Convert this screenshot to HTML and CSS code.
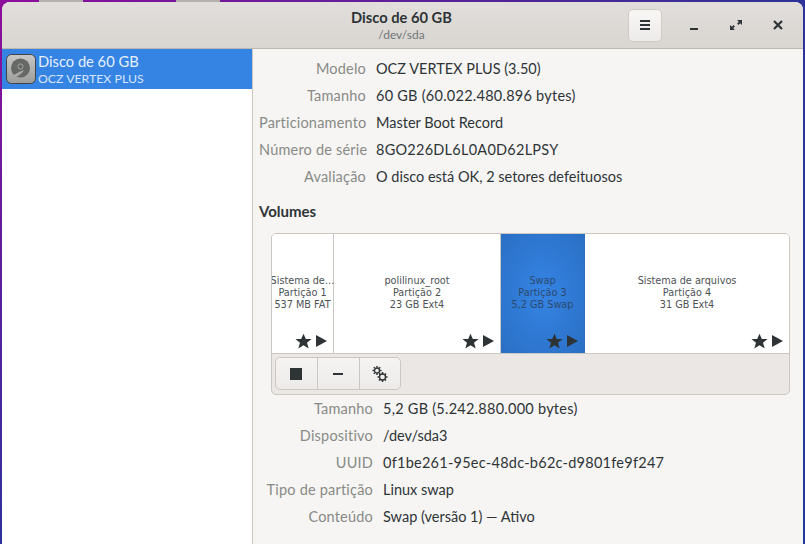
FILE: index.html
```html
<!DOCTYPE html>
<html lang="pt">
<head>
<meta charset="utf-8">
<title>Disco de 60 GB</title>
<link rel="stylesheet" href="styles.css">
</head>
<body>
<div class="desk-tab tab-a"></div>
<div class="desk-tab tab-b"></div>
<div class="window">
  <header class="titlebar">
    <div class="titles">
      <div class="title">Disco de 60 GB</div>
      <div class="subtitle">/dev/sda</div>
    </div>
    <button class="menu-btn" aria-label="Menu">
      <svg width="16" height="16" viewBox="0 0 16 16"><path d="M3 3h10v2H3zM3 7h10v2H3zM3 11h10v2H3z" fill="#2e3436"/></svg>
    </button>
    <div class="wm">
      <svg width="16" height="16" viewBox="0 0 16 16"><path d="M4 11h8v2H4z" fill="#2e3436"/></svg>
      <svg width="16" height="16" viewBox="0 0 16 16"><path d="M9 3h5v5l-1.800-1.800-1.700 1.700-1.400-1.400 1.700-1.700zM7 13H2V8l1.800 1.800 1.700-1.700 1.400 1.400-1.700 1.700z" fill="#2e3436"/></svg>
      <svg width="16" height="16" viewBox="0 0 16 16"><path d="M4 4l8 8M12 4l-8 8" stroke="#2e3436" stroke-width="2.200" fill="none"/></svg>
    </div>
  </header>
  <div class="content">
    <aside class="sidebar">
      <div class="drive">
        <svg class="hd" width="30" height="30" viewBox="0 0 30 30">
          <defs><linearGradient id="hdg" x1="0" y1="0" x2="0" y2="1"><stop offset="0" stop-color="#c8c8c6"/><stop offset="1" stop-color="#9c9c9a"/></linearGradient></defs>
          <rect x="0.500" y="0.500" width="29" height="29" rx="5" fill="url(#hdg)" stroke="#3f4346"/>
          <circle cx="14.500" cy="14" r="9.500" fill="#666866"/>
          <circle cx="14.500" cy="12.500" r="2.600" fill="none" stroke="#a5a5a3"/>
          <path d="M6 22l8-4.500 4-1.500-2 3-7 5z" fill="#a8a8a6"/>
        </svg>
        <div class="drive-text">
          <div class="drive-name">Disco de 60 GB</div>
          <div class="drive-model">OCZ VERTEX PLUS</div>
        </div>
      </div>
    </aside>
    <main class="main">
      <dl class="props top">
        <dt>Modelo</dt><dd>OCZ VERTEX PLUS (3.50)</dd>
        <dt>Tamanho</dt><dd class="numeric">60 GB (60.022.480.896 bytes)</dd>
        <dt>Particionamento</dt><dd>Master Boot Record</dd>
        <dt>Número de série</dt><dd class="numeric">8GO226DL6L0A0D62LPSY</dd>
        <dt>Avaliação</dt><dd>O disco está OK, 2 setores defeituosos</dd>
      </dl>
      <h2 class="volumes-title">Volumes</h2>
      <section class="volumes">
        <div class="parts">
          <div class="part p1">
            <div class="part-label">Sistema de…<br>Partição 1<br>537 MB FAT</div>
            <div class="part-icons"><svg class="star" viewBox="0 0 16 16"><path d="M8 .6l2.200 5h5.400l-4.300 3.500 1.600 5.500L8 11.500l-4.900 3.100 1.600-5.500L.4 5.600h5.400z"/></svg><svg class="play" viewBox="0 0 11 12"><path d="M0 0l11 6-11 6z"/></svg></div>
          </div>
          <div class="part p2">
            <div class="part-label">polilinux_root<br>Partição 2<br>23 GB Ext4</div>
            <div class="part-icons"><svg class="star" viewBox="0 0 16 16"><path d="M8 .6l2.200 5h5.400l-4.300 3.500 1.600 5.500L8 11.500l-4.900 3.100 1.600-5.500L.4 5.600h5.400z"/></svg><svg class="play" viewBox="0 0 11 12"><path d="M0 0l11 6-11 6z"/></svg></div>
          </div>
          <div class="part p3">
            <div class="part-label">Swap<br>Partição 3<br>5,2 GB Swap</div>
            <div class="part-icons"><svg class="star" viewBox="0 0 16 16"><path d="M8 .6l2.200 5h5.400l-4.300 3.500 1.600 5.500L8 11.500l-4.900 3.100 1.600-5.500L.4 5.600h5.400z"/></svg><svg class="play" viewBox="0 0 11 12"><path d="M0 0l11 6-11 6z"/></svg></div>
          </div>
          <div class="part p4">
            <div class="part-label">Sistema de arquivos<br>Partição 4<br>31 GB Ext4</div>
            <div class="part-icons"><svg class="star" viewBox="0 0 16 16"><path d="M8 .6l2.200 5h5.400l-4.300 3.500 1.600 5.500L8 11.500l-4.900 3.100 1.600-5.500L.4 5.600h5.400z"/></svg><svg class="play" viewBox="0 0 11 12"><path d="M0 0l11 6-11 6z"/></svg></div>
          </div>
        </div>
        <div class="toolbar">
          <div class="btn-group">
            <button class="tool"><svg width="12" height="12" viewBox="0 0 12 12"><rect width="12" height="12" fill="#2e3436"/></svg></button>
            <button class="tool"><svg width="12" height="12" viewBox="0 0 12 12"><rect x="1" y="5" width="10" height="2" fill="#2e3436"/></svg></button>
            <button class="tool"><svg width="16" height="16" viewBox="0 0 16 16"><g fill="none" stroke="#2e3436"><circle cx="5" cy="4.500" r="2.500" stroke-width="1.300"/><circle cx="10.500" cy="11" r="3" stroke-width="1.300"/><path d="M5 0v1.500M5 7.500V9M.5 4.500H2M8 4.500h1.500M1.800 1.300l1 1M7.200 6.700l1 1M8.200 1.300l-1 1M2.800 6.700l-1 1M10.500 6v2M10.500 14v2M5.500 11h2M13.500 11h2M7 7.500l1.300 1.300M12.700 13.200L14 14.500M14 7.500l-1.300 1.300M8.300 13.200L7 14.500" stroke-width="1.500"/></g></svg></button>
          </div>
        </div>
      </section>
      <dl class="props bottom">
        <dt>Tamanho</dt><dd class="numeric">5,2 GB (5.242.880.000 bytes)</dd>
        <dt>Dispositivo</dt><dd>/dev/sda3</dd>
        <dt>UUID</dt><dd class="numeric">0f1be261-95ec-48dc-b62c-d9801fe9f247</dd>
        <dt>Tipo de partição</dt><dd>Linux swap</dd>
        <dt>Conteúdo</dt><dd>Swap (versão 1) — Ativo</dd>
      </dl>
    </main>
  </div>
</div>
</body>
</html>
```

FILE: styles.css
```css
* { box-sizing: border-box; }
html, body { height: 100%; }
body {
  margin: 0;
  overflow: hidden;
  padding: 2px 2px 0 2px;
  background: linear-gradient(to bottom right, #8c0d9a 0%, #2e3299 50%, #1f3a9a 100%);
  font-family: Lato, sans-serif;
  font-size: 14.500px;
  color: #2e3436;
  position: relative;
}
.desk-tab {
  position: absolute;
  top: 0;
  width: 44px;
  height: 2px;
  background: #b4b0ac;
}
.tab-a { left: 39px; }
.tab-b { left: 176px; }
.window {
  height: 100%;
  display: flex;
  flex-direction: column;
  background: #f6f5f4;
  border-radius: 8px 8px 0 0;
  overflow: hidden;
}
.titlebar {
  height: 47px;
  flex: none;
  display: flex;
  align-items: center;
  justify-content: flex-end;
  position: relative;
  background: linear-gradient(#e1dedb, #d9d5d1);
  border-bottom: 1px solid #bfb8b1;
}
.titles {
  position: absolute;
  left: 0;
  right: 2px;
  top: 6px;
  text-align: center;
}
.title { font-weight: 700; font-size: 14.700px; line-height: 19px; }
.subtitle { font-size: 12px; line-height: 16px; color: #717677; }
.menu-btn {
  position: relative;
  width: 34px;
  height: 33px;
  padding: 0;
  display: flex;
  align-items: center;
  justify-content: center;
  background: linear-gradient(#f8f7f6, #edebe9);
  border: 1px solid #cfcac4;
  border-radius: 5px;
  margin-right: 24px;
}
.wm { display: flex; position: relative; gap: 26px; padding-right: 17px; }
.content { flex: 1; display: flex; min-height: 0; }
.sidebar {
  width: 251px;
  flex: none;
  background: #fff;
  border-right: 1px solid #c9c5bf;
}
.drive {
  height: 40px;
  display: flex;
  align-items: center;
  gap: 2px;
  padding-left: 4px;
  background: #3584e4;
  color: #fff;
}
.drive-name { font-size: 14.700px; line-height: 19px; color: #e6f0fc; }
.drive-model { font-size: 12.300px; line-height: 16px; color: #d5e5fa; }
.main { flex: 1; min-width: 0; padding: 6px 13px 0 6px; }
.props {
  margin: 0;
  display: grid;
  column-gap: 10px;
  grid-auto-rows: 27px;
  align-items: center;
  font-size: 14.500px;
}
.props dt { text-align: right; color: #888a85; white-space: nowrap; letter-spacing: .2px; }
.props dd { margin: 0; }
.props .numeric { letter-spacing: .25px; }
.props.top { grid-template-columns: 107px 1fr; }
.props.bottom { margin-top: 0; grid-template-columns: 114px 1fr; }
.volumes-title { margin: 12px 0 13px; font-size: 15px; line-height: 18px; font-weight: 700; }
.volumes {
  margin-left: 12px;
  border: 1px solid #cdc7c2;
  border-radius: 5px;
  background: #eae7e4;
  overflow: hidden;
}
.parts { display: flex; height: 120px; border-bottom: 1px solid #cdc7c2; }
.part {
  position: relative;
  display: flex;
  align-items: center;
  justify-content: center;
  background: #fff;
  border-right: 1px solid #cdc7c2;
  font-family: "DejaVu Sans", sans-serif;
  font-size: 9.700px;
  line-height: 12px;
  text-align: center;
  color: #4d5254;
}
.part-label { white-space: nowrap; margin-bottom: 1px; }
.p1 { width: 62px; }
.p2 { width: 167px; }
.p3 { width: 84px; background: radial-gradient(ellipse at center, #3584e4 0%, #2a6fc4 100%); color: #2c4a70; border-right: 1px solid #2a6fc4; }
.p4 { flex: 1; border-right: 0; }
.part-icons {
  position: absolute;
  right: 6px;
  bottom: 3px;
  display: flex;
  align-items: center;
  gap: 4px;
  fill: #2e3436;
}
.star { width: 17px; height: 17px; }
.play { width: 11px; height: 12px; margin-bottom: 2px; }
.toolbar { padding: 3px 0 4px 3px; height: 40px; }
.btn-group {
  display: inline-flex;
  height: 33px;
  border: 1px solid #cdc7c2;
  border-radius: 5px;
  background: linear-gradient(#f5f4f2, #edebe9);
  overflow: hidden;
}
.tool {
  width: 42px;
  padding: 0 2px 0 0;
  border: 0;
  border-right: 1px solid #cdc7c2;
  background: transparent;
  display: flex;
  align-items: center;
  justify-content: center;
}
.tool:last-child { border-right: 0; width: 40px; padding: 0; }
```
